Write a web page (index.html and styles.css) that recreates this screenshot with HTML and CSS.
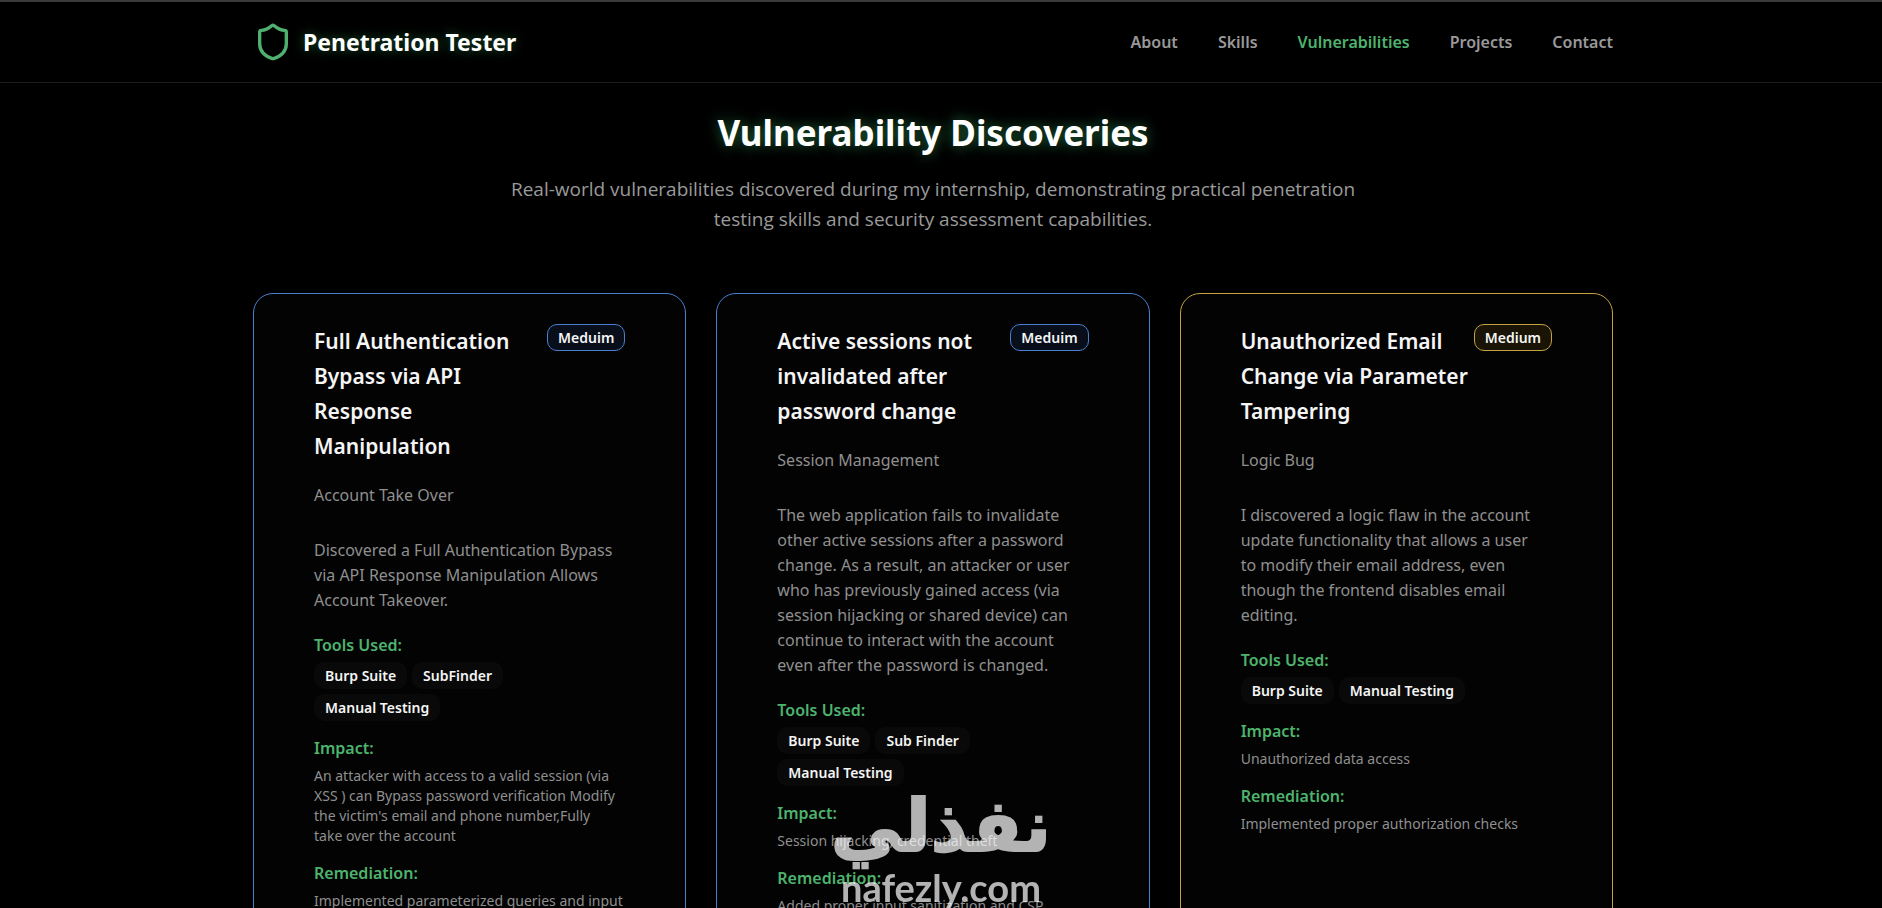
FILE: index.html
```html
<!DOCTYPE html>
<html lang="en">
<head>
<meta charset="utf-8">
<title>Penetration Tester</title>
<link rel="stylesheet" href="styles.css">
</head>
<body>
<header class="site-header">
  <div class="container header-row">
    <a class="brand" href="#">
      <svg class="brand-icon" viewBox="0 0 24 24" fill="none" stroke="currentColor" stroke-width="2" stroke-linecap="round" stroke-linejoin="round" aria-hidden="true"><path d="M20 13c0 5-3.5 7.5-7.66 8.95a1 1 0 0 1-.67-.01C7.5 20.5 4 18 4 13V6a1 1 0 0 1 1-1c2 0 4.500-1.200 6.240-2.720a1.170 1.170 0 0 1 1.520 0C14.510 3.810 17 5 19 5a1 1 0 0 1 1 1z"/></svg>
      <span>Penetration Tester</span>
    </a>
    <nav class="nav">
      <a href="#about">About</a>
      <a href="#skills">Skills</a>
      <a class="active" href="#vulnerabilities">Vulnerabilities</a>
      <a href="#projects">Projects</a>
      <a href="#contact">Contact</a>
    </nav>
  </div>
</header>

<main class="container" id="vulnerabilities">
  <div class="intro">
    <h1>Vulnerability Discoveries</h1>
    <p>Real-world vulnerabilities discovered during my internship, demonstrating practical penetration testing skills and security assessment capabilities.</p>
  </div>

  <div class="cards">
    <article class="card blue">
      <div class="card-head">
        <h2>Full Authentication Bypass via API Response Manipulation</h2>
        <span class="badge">Meduim</span>
      </div>
      <p class="category">Account Take Over</p>
      <p class="description">Discovered a Full Authentication Bypass via API Response Manipulation Allows Account Takeover.</p>
      <h3>Tools Used:</h3>
      <ul class="tools"><li>Burp Suite</li><li>SubFinder</li><li>Manual Testing</li></ul>
      <h3>Impact:</h3>
      <p class="detail">An attacker with access to a valid session (via XSS ) can Bypass password verification Modify the victim's email and phone number,Fully take&nbsp;over the account</p>
      <h3>Remediation:</h3>
      <p class="detail">Implemented parameterized queries and input</p>
    </article>

    <article class="card blue">
      <div class="card-head">
        <h2>Active sessions not invalidated after password change</h2>
        <span class="badge">Meduim</span>
      </div>
      <p class="category">Session Management</p>
      <p class="description">The web application fails to invalidate other active sessions after a password change. As a result, an attacker or user who has previously gained access (via session hijacking or shared device) can continue to interact with the account even after the password is changed.</p>
      <h3>Tools Used:</h3>
      <ul class="tools"><li>Burp Suite</li><li>Sub Finder</li><li>Manual Testing</li></ul>
      <h3>Impact:</h3>
      <p class="detail">Session hijacking, credential theft</p>
      <h3>Remediation:</h3>
      <p class="detail">Added proper input sanitization and CSP</p>
    </article>

    <article class="card yellow">
      <div class="card-head">
        <h2>Unauthorized Email Change via Parameter Tampering</h2>
        <span class="badge">Medium</span>
      </div>
      <p class="category">Logic Bug</p>
      <p class="description">I discovered a logic flaw in the account update functionality that allows a user to&nbsp;modify their email address, even though the frontend disables email editing.</p>
      <h3>Tools Used:</h3>
      <ul class="tools"><li>Burp Suite</li><li>Manual Testing</li></ul>
      <h3>Impact:</h3>
      <p class="detail">Unauthorized data access</p>
      <h3>Remediation:</h3>
      <p class="detail">Implemented proper authorization checks</p>
    </article>
  </div>
</main>

<div class="watermark">
  <span class="watermark-ar" lang="ar" dir="rtl">نفذلي</span>
  <span class="watermark-en">nafezly.com</span>
</div>
</body>
</html>
```

FILE: styles.css
```css
* {
  box-sizing: border-box;
  margin: 0;
}

body {
  background: #000;
  color: #f5f5f5;
  font-family: "Noto Sans", "Open Sans", sans-serif;
  border-top: 2px solid #3a3a3a;
}

a {
  color: inherit;
  text-decoration: none;
}

.site-header {
  border-bottom: 1px solid #1c1c1c;
  padding-right: 16px;
}

.container {
  max-width: 1360px;
  margin: 0 auto;
}

main.container {
  max-width: 1376px;
  padding-right: 16px;
}

.header-row {
  display: flex;
  align-items: center;
  justify-content: space-between;
  height: 80px;
}

.brand {
  display: flex;
  align-items: center;
  gap: 10px;
  font-size: 23px;
  font-weight: 700;
  color: #fff;
  text-shadow: 0 0 12px rgba(74, 222, 128, 0.4);
}

.brand-icon {
  width: 40px;
  height: 40px;
  color: #50b070;
}

.nav {
  display: flex;
  gap: 40px;
  font-size: 16px;
  font-weight: 600;
  color: #999;
}

.nav .active {
  color: #4db36d;
}

.intro {
  text-align: center;
  padding: 25px 0 59px;
}

.intro h1 {
  font-size: 35px;
  line-height: 50px;
  font-weight: 700;
  color: #fff;
  text-shadow: 0 0 14px rgba(74, 222, 128, 0.5);
}

.intro p {
  max-width: 880px;
  margin: 16px auto 0;
  font-family: "Open Sans", "Noto Sans", sans-serif;
  font-size: 19px;
  line-height: 30px;
  color: #9a9a9a;
}

.cards {
  display: grid;
  grid-template-columns: repeat(3, 1fr);
  gap: 30px;
}

.card {
  padding: 30px 60px;
  background: #030303;
  border: 1px solid #4a7fd0;
  border-radius: 20px;
}

.card.yellow {
  border-color: #c4a244;
}

.card-head {
  display: flex;
  align-items: flex-start;
  justify-content: space-between;
}

.card h2 {
  font-size: 21px;
  line-height: 35px;
  font-weight: 600;
}

.badge {
  flex: none;
  padding: 0 10px;
  border: 1px solid #4a7fd0;
  border-radius: 10px;
  background: #080e1a;
  font-size: 14px;
  line-height: 25px;
  font-weight: 600;
}

.yellow .badge {
  border-color: #c4a244;
  background: #191405;
}

.category {
  margin: 19px 0 30px;
  font-size: 16px;
  line-height: 25px;
  color: #8f8f8f;
}

.description {
  margin-bottom: 20px;
  font-size: 16px;
  line-height: 25px;
  color: #8f8f8f;
}

.card h3 {
  font-size: 16px;
  line-height: 25px;
  font-weight: 600;
  color: #4db36d;
}

.tools {
  display: flex;
  flex-wrap: wrap;
  gap: 5px;
  margin: 4px 0 15px;
  padding: 0;
  list-style: none;
}

.tools li {
  padding: 0 11px;
  border-radius: 10px;
  background: #090909;
  font-size: 14px;
  line-height: 27px;
  font-weight: 600;
}

.detail {
  margin: 5px 0 15px;
  font-size: 14px;
  line-height: 20px;
  color: #8f8f8f;
}

.watermark {
  position: fixed;
  left: 0;
  right: 0;
  bottom: 0;
  display: flex;
  flex-direction: column;
  align-items: center;
  color: #fff;
  opacity: 0.7;
  pointer-events: none;
}

.watermark-ar {
  font-family: "DejaVu Sans", sans-serif;
  font-size: 72px;
  line-height: 80px;
  font-weight: 700;
  -webkit-text-stroke: 2px #fff;
}

.watermark-en {
  font-family: "Lato", sans-serif;
  font-size: 38px;
  line-height: 42px;
  font-weight: 700;
}
```
